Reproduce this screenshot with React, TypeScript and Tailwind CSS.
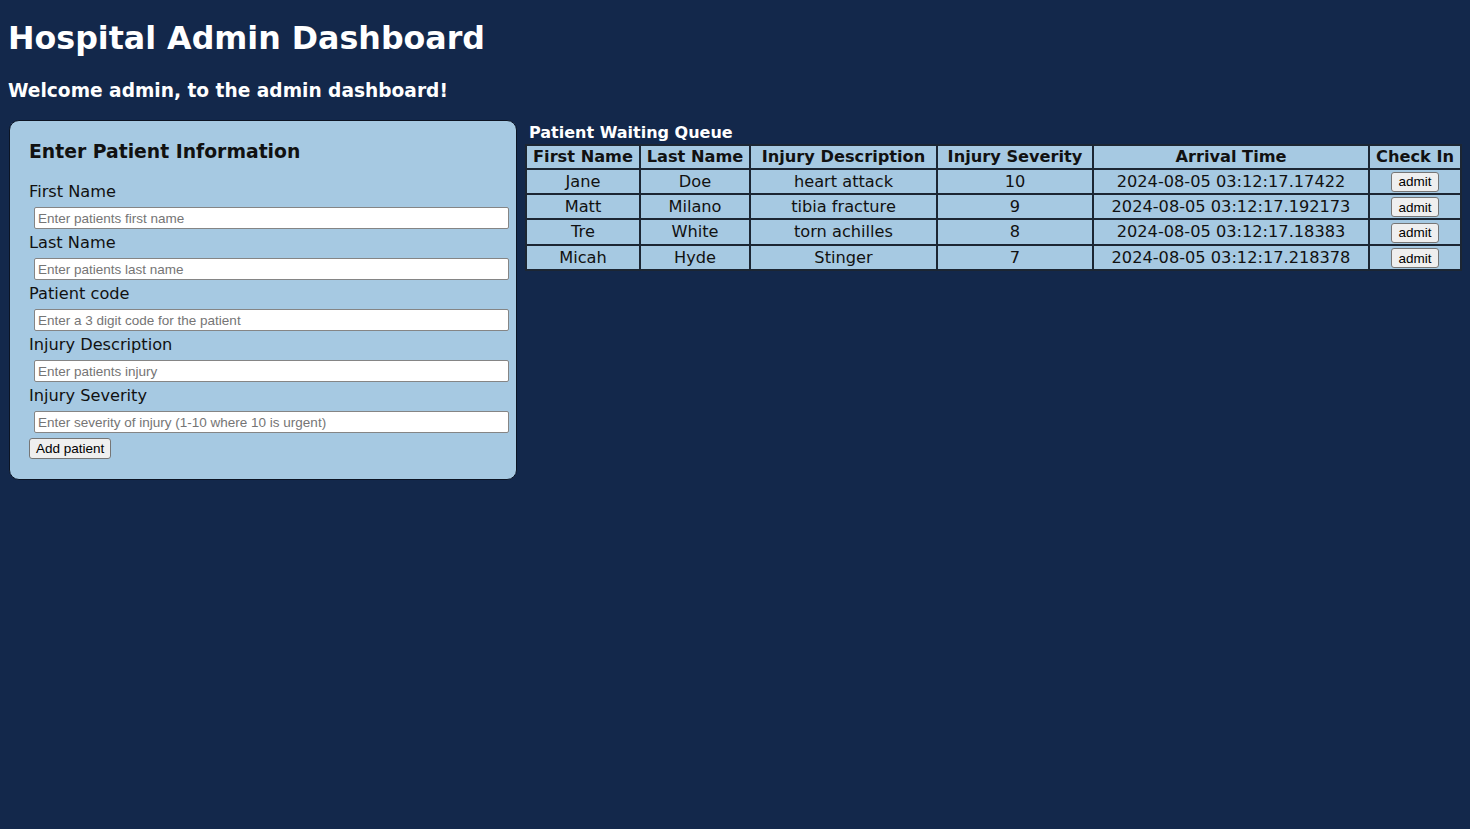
import React from 'react';

interface Patient {
  firstName: string;
  lastName: string;
  injury: string;
  severity: number;
  arrival: string;
}

const patients: Patient[] = [
  { firstName: 'Jane', lastName: 'Doe', injury: 'heart attack', severity: 10, arrival: '2024-08-05 03:12:17.17422' },
  { firstName: 'Matt', lastName: 'Milano', injury: 'tibia fracture', severity: 9, arrival: '2024-08-05 03:12:17.192173' },
  { firstName: 'Tre', lastName: 'White', injury: 'torn achilles', severity: 8, arrival: '2024-08-05 03:12:17.18383' },
  { firstName: 'Micah', lastName: 'Hyde', injury: 'Stinger', severity: 7, arrival: '2024-08-05 03:12:17.218378' },
];

const fields = [
  { label: 'First Name', placeholder: 'Enter patients first name' },
  { label: 'Last Name', placeholder: 'Enter patients last name' },
  { label: 'Patient code', placeholder: 'Enter a 3 digit code for the patient' },
  { label: 'Injury Description', placeholder: 'Enter patients injury' },
  { label: 'Injury Severity', placeholder: 'Enter severity of injury (1-10 where 10 is urgent)' },
];

const cell = 'border-2 border-[#1c2633] text-center px-1 whitespace-nowrap';
const arial = "[font-family:'Liberation_Sans',Arial,sans-serif]";

export default function App() {
  return (
    <div className="min-h-screen bg-[#13284b] pl-2 pt-[18px] [font-family:'DejaVu_Sans',Verdana,sans-serif]">
      <h1 className="text-[31.7px] leading-[40px] font-bold text-white">Hospital Admin Dashboard</h1>
      <h2 className="mt-[19px] text-[18.6px] leading-[28px] font-bold text-white">Welcome admin, to the admin dashboard!</h2>

      <div className="mt-[15px] flex items-start">
        <form className="ml-px w-[508px] rounded-[10px] border border-[#0b1424] bg-[#a6c9e2] px-[19px] pt-[20px] pb-[19px] text-[#111]">
          <h3 className="text-[18.8px] leading-[22px] font-bold">Enter Patient Information</h3>
          <div className="mt-[18px] flex flex-col gap-[3px]">
            {fields.map((f) => (
              <div key={f.label} className="flex flex-col gap-[5px]">
                <label className="text-[16.2px] leading-[21px]">{f.label}</label>
                <input
                  placeholder={f.placeholder}
                  className={`ml-[5px] h-[22px] w-[475px] rounded-[2px] border border-[#858585] bg-white px-[3px] text-[13.5px] placeholder:text-[#757575] ${arial}`}
                />
              </div>
            ))}
          </div>
          <button
            type="button"
            className={`mt-[5px] h-[21px] rounded-[3px] border border-[#767676] bg-[#efefef] px-[6px] text-[13.5px] leading-[19px] text-black ${arial}`}
          >
            Add patient
          </button>
        </form>

        <div className="ml-[8px]">
          <div className="h-[24px] pl-[4px] pt-[3px] text-[16px] leading-[20px] font-bold text-white">Patient Waiting Queue</div>
          <table className="w-[937px] table-fixed border-collapse border-2 border-[#1c2633] bg-[#a6c9e2] text-[16.2px] text-[#111]">
            <thead>
              <tr className="h-[23.5px] leading-[19px]">
                <th className={`${cell} w-[114px]`}>First Name</th>
                <th className={`${cell} w-[110px]`}>Last Name</th>
                <th className={`${cell} w-[187px]`}>Injury Description</th>
                <th className={`${cell} w-[156px]`}>Injury Severity</th>
                <th className={`${cell} w-[276px]`}>Arrival Time</th>
                <th className={cell}>Check In</th>
              </tr>
            </thead>
            <tbody>
              {patients.map((p) => (
                <tr key={p.firstName} className="h-[25.4px] leading-[21px]">
                  <td className={cell}>{p.firstName}</td>
                  <td className={cell}>{p.lastName}</td>
                  <td className={cell}>{p.injury}</td>
                  <td className={cell}>{p.severity}</td>
                  <td className={cell}>{p.arrival}</td>
                  <td className={cell}>
                    <button
                      type="button"
                      className={`h-[20px] rounded-[3px] border border-[#767676] bg-[#efefef] px-[6px] align-middle text-[13.5px] leading-[17px] text-black ${arial}`}
                    >
                      admit
                    </button>
                  </td>
                </tr>
              ))}
            </tbody>
          </table>
        </div>
      </div>
    </div>
  );
}
